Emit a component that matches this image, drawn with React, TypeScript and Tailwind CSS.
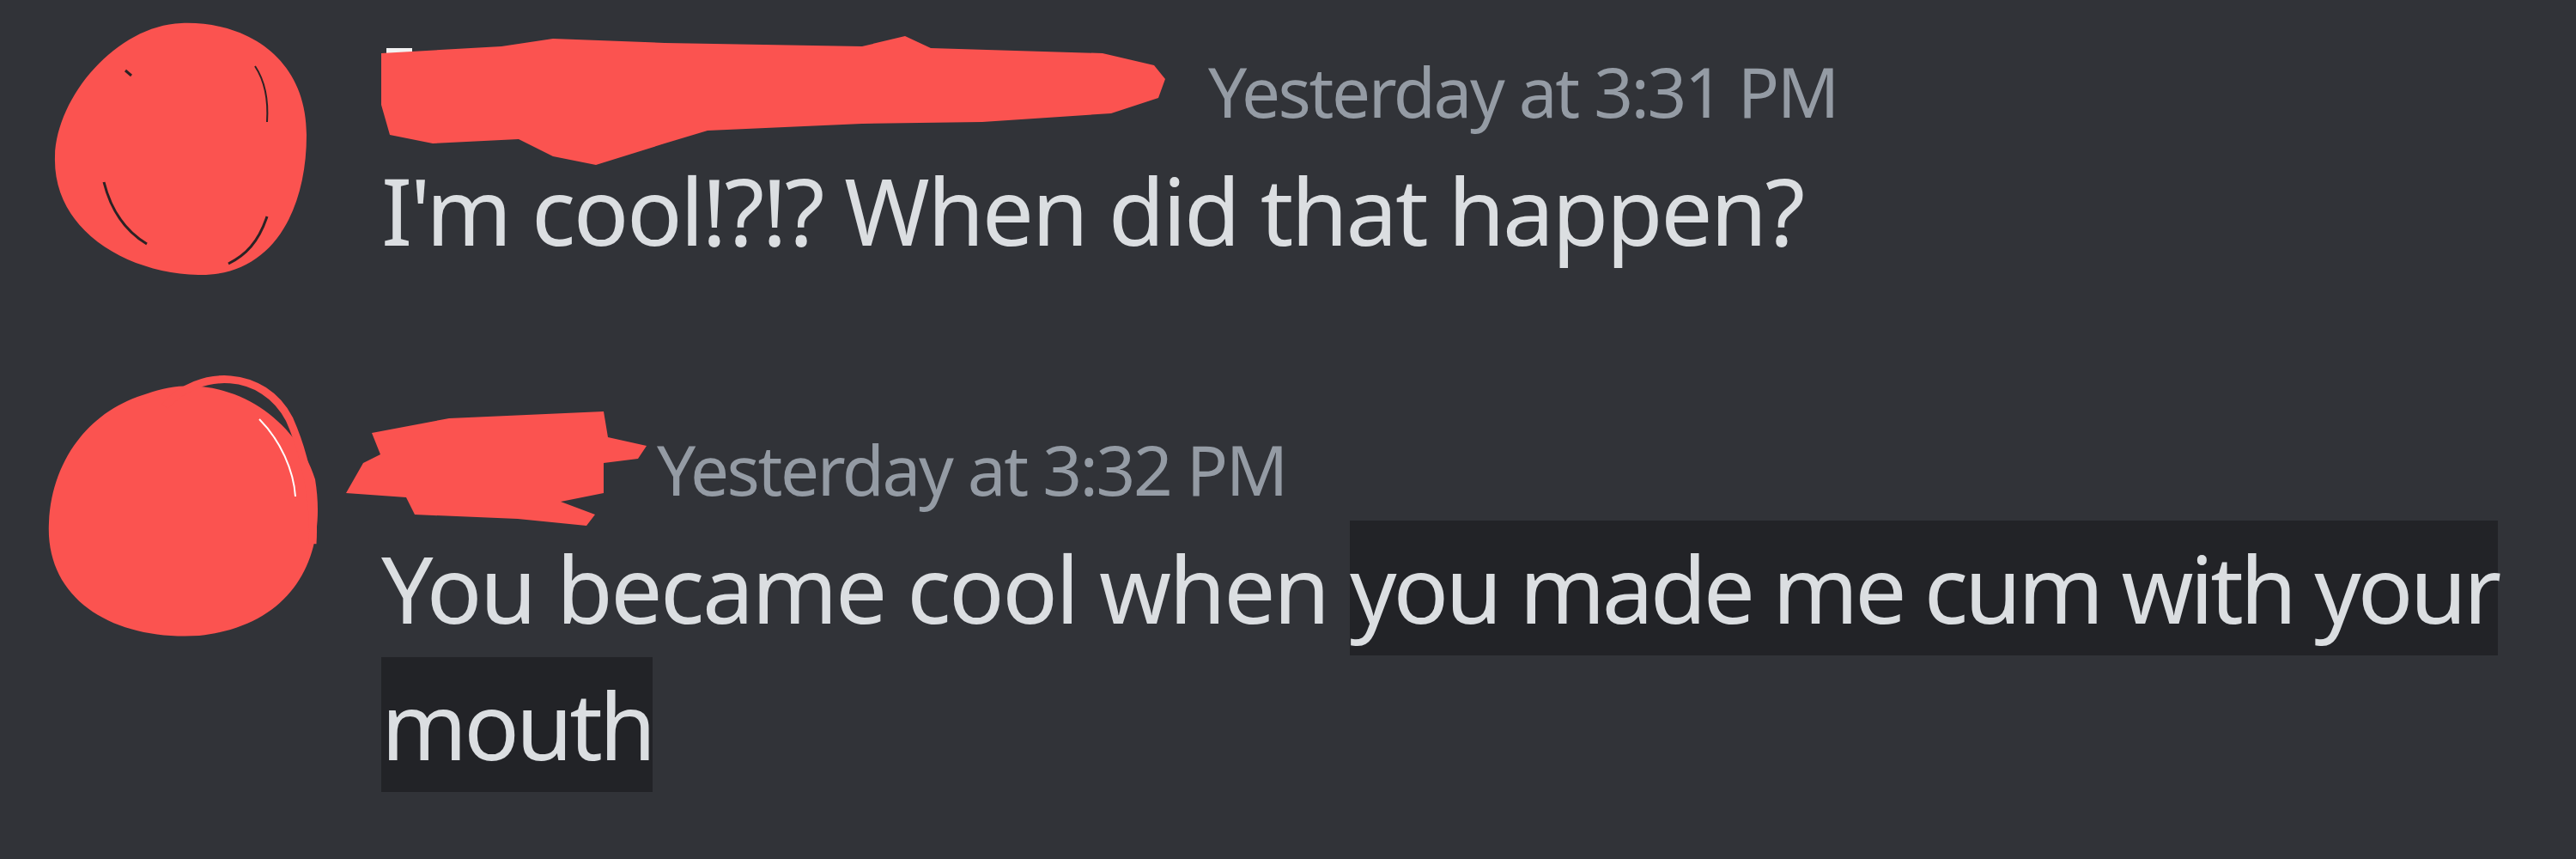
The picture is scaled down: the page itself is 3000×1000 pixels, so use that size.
import React from 'react';

const RED = '#fb5350';

function AvatarOne() {
  return (
    <svg width="300" height="300" viewBox="0 0 300 300" className="-mt-[25px] ml-[61px] shrink-0">
      <circle cx="150" cy="130" r="120" fill="#3a3326" />
      <path
        d="M150,5 C225,2 296,45 296,135 C296,225 255,300 170,298 C85,296 0,245 3,160 C5,90 75,8 150,5 Z"
        fill={RED}
      />
      <path d="M60,190 C70,230 90,250 110,262" stroke="#2b2224" strokeWidth="3" fill="none" />
      <path d="M250,230 C240,260 225,275 205,285" stroke="#2b2224" strokeWidth="3" fill="none" />
      <path d="M85,60 L92,66" stroke="#2b2224" strokeWidth="3" />
      <path d="M250,120 C252,90 246,70 236,55" stroke="#2b2224" strokeWidth="2" fill="none" />
    </svg>
  );
}

function AvatarTwo() {
  return (
    <svg width="322" height="318" viewBox="0 0 322 318" className="-mt-[59px] ml-[52px] shrink-0 -mr-[22px]">
      <path
        d="M120,30 C200,0 290,50 315,130 C330,220 290,300 180,312 C80,318 0,270 5,180 C8,110 50,50 120,30 Z"
        fill={RED}
      />
      <path
        d="M140,45 C180,0 255,2 285,60 C305,105 315,160 312,205"
        stroke={RED}
        strokeWidth="9"
        fill="none"
      />
      <path d="M250,60 C275,85 290,120 292,150" stroke="#ffffff" strokeWidth="2" fill="none" />
    </svg>
  );
}

function NameOne() {
  return (
    <svg width="913" height="150" viewBox="0 0 913 150" className="self-start -mt-[5px] shrink-0">
      <rect x="6" y="14" width="30" height="12" fill="#f2f2f2" />
      <rect x="360" y="16" width="30" height="8" fill="#f2f2f2" />
      <path
        d="M0,20 L140,12 L200,3 L330,8 L560,12 L610,0 L640,14 L840,20 L900,34 L913,50 L905,72 L850,90 L700,100 L560,102 L380,110 L330,125 L250,150 L200,140 L160,120 L60,125 L10,115 L0,80 Z"
        fill={RED}
      />
    </svg>
  );
}

function NameTwo() {
  return (
    <svg width="353" height="133" viewBox="0 0 353 133" className="self-start -mt-[8px] -ml-[41px] shrink-0">
      <path
        d="M30,25 L120,8 L300,0 L305,30 L350,40 L340,55 L300,60 L300,95 L250,105 L290,120 L280,133 L200,125 L80,120 L70,100 L0,95 L20,60 L40,50 Z"
        fill={RED}
      />
    </svg>
  );
}

export default function App() {
  return (
    <div
      className="w-[3000px] h-[1000px] bg-[#313338] pt-[47px] overflow-hidden text-[#dbdee1]"
      style={{ fontFamily: '"Noto Sans", "Open Sans", sans-serif' }}
    >
      <div className="flex">
        <div className="w-[444px] shrink-0">
          <AvatarOne />
        </div>
        <div className="flex flex-col">
          <div className="flex h-[118px]">
            <NameOne />
            <span className="ml-[50px] text-[80px] leading-[118px] tracking-[-2.4px] text-[#949ba4] whitespace-nowrap">
              Yesterday at 3:31 PM
            </span>
          </div>
          <div className="text-[107px] leading-[159px] tracking-[-2.5px] whitespace-nowrap">
            I'm cool!?!? When did that happen?
          </div>
        </div>
      </div>

      <div className="flex mt-[163px]">
        <div className="w-[444px] shrink-0">
          <AvatarTwo />
        </div>
        <div className="flex flex-col">
          <div className="flex h-[118px]">
            <NameTwo />
            <span className="ml-[9px] text-[80px] leading-[118px] tracking-[-2.4px] text-[#949ba4] whitespace-nowrap">
              Yesterday at 3:32 PM
            </span>
          </div>
          <div className="text-[107px] leading-[159px] tracking-[-2.5px] whitespace-nowrap">
            You became cool when{' '}
            <span className="bg-[#222327] py-[6px] tracking-[-3.9px] [box-decoration-break:clone]">
              you made me cum with your
              <br />
              mouth
            </span>
          </div>
        </div>
      </div>
    </div>
  );
}
